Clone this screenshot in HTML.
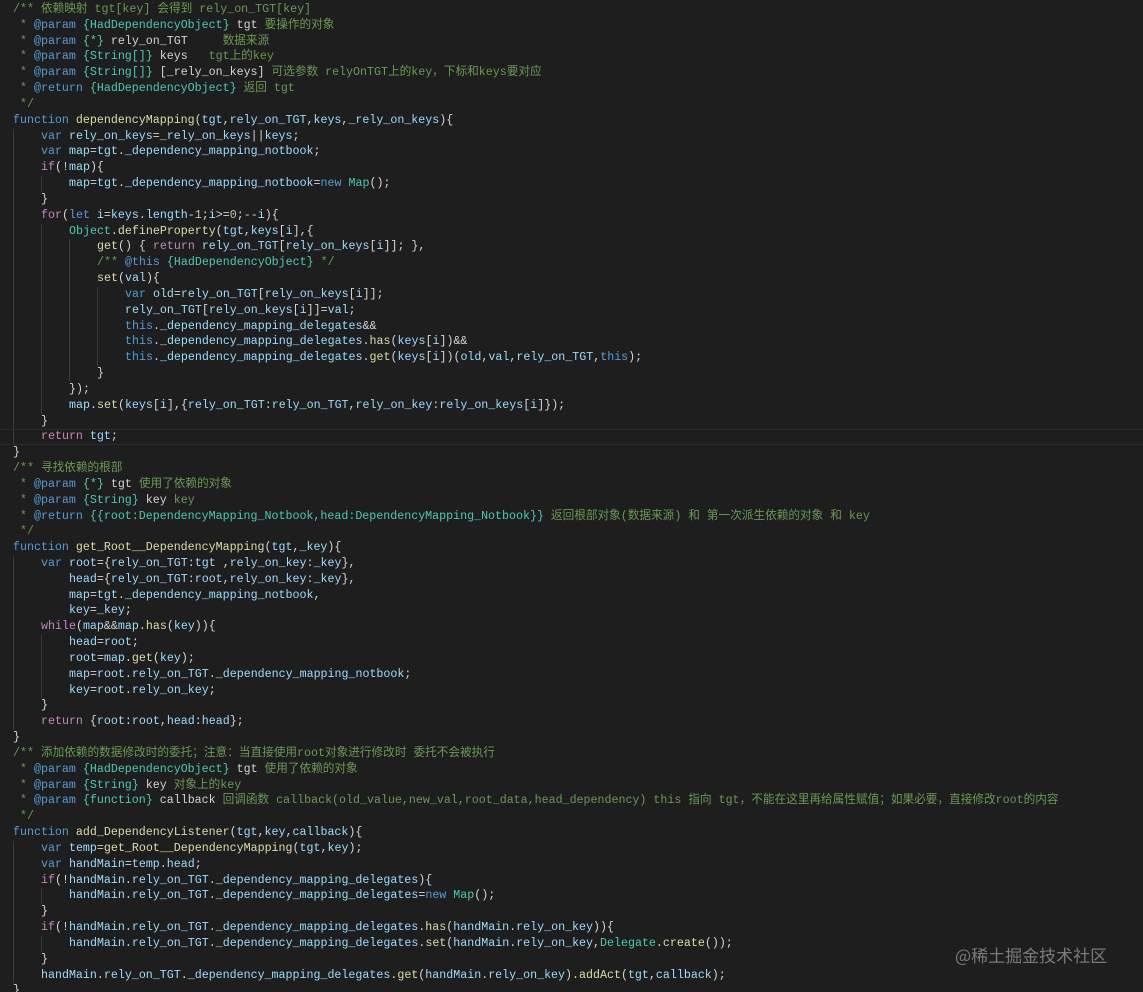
<!DOCTYPE html>
<html><head><meta charset="utf-8"><style>
html,body{margin:0;padding:0;background:#1e1e1e;width:1143px;height:992px;overflow:hidden}
pre{margin:0;padding:2px 0 0 13px;font-family:"Liberation Mono","Noto Sans CJK SC",monospace;font-size:11.65px;line-height:15.83px;color:#9cdcfe;white-space:pre}
.c{color:#6a9955}.a{color:#569cd6}.t{color:#4ec9b0}.w{color:#d4d4d4}
.k{color:#569cd6}.p{color:#c586c0}.f{color:#dcdcaa}.n{color:#b5cea8}.d{color:#d4d4d4}
i{display:inline-block;width:28px;height:15.83px;vertical-align:top;box-shadow:inset 1px 0 0 #3a3a3a}
.hl{position:absolute;left:0;top:429px;width:1143px;height:16px;border-top:1px solid #2c2c2c;border-bottom:1px solid #2c2c2c;box-sizing:border-box}
.wm{position:absolute;left:955px;top:942px;font-family:"Noto Sans CJK SC",sans-serif;font-size:17px;color:#7a7a7a}
</style></head><body>
<div class="hl"></div>
<pre><span class="c">/** 依赖映射 tgt[key] 会得到 rely_on_TGT[key]</span>
<span class="c"> * <span class="a">@param</span> <span class="t">{HadDependencyObject}</span> <span class="w">tgt</span> 要操作的对象</span>
<span class="c"> * <span class="a">@param</span> <span class="t">{*}</span> <span class="w">rely_on_TGT</span>     数据来源</span>
<span class="c"> * <span class="a">@param</span> <span class="t">{String[]}</span> <span class="w">keys</span>   tgt上的key</span>
<span class="c"> * <span class="a">@param</span> <span class="t">{String[]}</span> <span class="w">[_rely_on_keys]</span> 可选参数 relyOnTGT上的key，下标和keys要对应</span>
<span class="c"> * <span class="a">@return</span> <span class="t">{HadDependencyObject}</span> 返回 tgt</span>
<span class="c"> */</span>
<span class="k">function</span> <span class="f">dependencyMapping</span><span class="d">(</span>tgt<span class="d">,</span>rely_on_TGT<span class="d">,</span>keys<span class="d">,</span>_rely_on_keys<span class="d">){</span>
<i></i><span class="k">var</span> rely_on_keys<span class="d">=</span>_rely_on_keys<span class="d">||</span>keys<span class="d">;</span>
<i></i><span class="k">var</span> map<span class="d">=</span>tgt<span class="d">.</span>_dependency_mapping_notbook<span class="d">;</span>
<i></i><span class="p">if</span><span class="d">(!</span>map<span class="d">){</span>
<i></i><i></i>map<span class="d">=</span>tgt<span class="d">.</span>_dependency_mapping_notbook<span class="d">=</span><span class="k">new</span> <span class="t">Map</span><span class="d">();</span>
<i></i><span class="d">}</span>
<i></i><span class="p">for</span><span class="d">(</span><span class="k">let</span> i<span class="d">=</span>keys<span class="d">.</span>length<span class="d">-</span><span class="n">1</span><span class="d">;</span>i<span class="d">&gt;=</span><span class="n">0</span><span class="d">;--</span>i<span class="d">){</span>
<i></i><i></i><span class="t">Object</span><span class="d">.</span><span class="f">defineProperty</span><span class="d">(</span>tgt<span class="d">,</span>keys<span class="d">[</span>i<span class="d">],{</span>
<i></i><i></i><i></i><span class="f">get</span><span class="d">() { </span><span class="p">return</span> rely_on_TGT<span class="d">[</span>rely_on_keys<span class="d">[</span>i<span class="d">]]; },</span>
<i></i><i></i><i></i><span class="c">/** <span class="a">@this</span> <span class="t">{HadDependencyObject}</span> */</span>
<i></i><i></i><i></i><span class="f">set</span><span class="d">(</span>val<span class="d">){</span>
<i></i><i></i><i></i><i></i><span class="k">var</span> old<span class="d">=</span>rely_on_TGT<span class="d">[</span>rely_on_keys<span class="d">[</span>i<span class="d">]];</span>
<i></i><i></i><i></i><i></i>rely_on_TGT<span class="d">[</span>rely_on_keys<span class="d">[</span>i<span class="d">]]=</span>val<span class="d">;</span>
<i></i><i></i><i></i><i></i><span class="k">this</span><span class="d">.</span>_dependency_mapping_delegates<span class="d">&amp;&amp;</span>
<i></i><i></i><i></i><i></i><span class="k">this</span><span class="d">.</span>_dependency_mapping_delegates<span class="d">.</span><span class="f">has</span><span class="d">(</span>keys<span class="d">[</span>i<span class="d">])&amp;&amp;</span>
<i></i><i></i><i></i><i></i><span class="k">this</span><span class="d">.</span>_dependency_mapping_delegates<span class="d">.</span><span class="f">get</span><span class="d">(</span>keys<span class="d">[</span>i<span class="d">])(</span>old<span class="d">,</span>val<span class="d">,</span>rely_on_TGT<span class="d">,</span><span class="k">this</span><span class="d">);</span>
<i></i><i></i><i></i><span class="d">}</span>
<i></i><i></i><span class="d">});</span>
<i></i><i></i>map<span class="d">.</span><span class="f">set</span><span class="d">(</span>keys<span class="d">[</span>i<span class="d">],{</span>rely_on_TGT<span class="d">:</span>rely_on_TGT<span class="d">,</span>rely_on_key<span class="d">:</span>rely_on_keys<span class="d">[</span>i<span class="d">]});</span>
<i></i><span class="d">}</span>
<i></i><span class="p">return</span> tgt<span class="d">;</span>
<span class="d">}</span>
<span class="c">/** 寻找依赖的根部</span>
<span class="c"> * <span class="a">@param</span> <span class="t">{*}</span> <span class="w">tgt</span> 使用了依赖的对象</span>
<span class="c"> * <span class="a">@param</span> <span class="t">{String}</span> <span class="w">key</span> key</span>
<span class="c"> * <span class="a">@return</span> <span class="t">{{root:DependencyMapping_Notbook,head:DependencyMapping_Notbook}}</span> 返回根部对象(数据来源) 和 第一次派生依赖的对象 和 key</span>
<span class="c"> */</span>
<span class="k">function</span> <span class="f">get_Root__DependencyMapping</span><span class="d">(</span>tgt<span class="d">,</span>_key<span class="d">){</span>
<i></i><span class="k">var</span> root<span class="d">={</span>rely_on_TGT<span class="d">:</span>tgt <span class="d">,</span>rely_on_key<span class="d">:</span>_key<span class="d">},</span>
<i></i>    head<span class="d">={</span>rely_on_TGT<span class="d">:</span>root<span class="d">,</span>rely_on_key<span class="d">:</span>_key<span class="d">},</span>
<i></i>    map<span class="d">=</span>tgt<span class="d">.</span>_dependency_mapping_notbook<span class="d">,</span>
<i></i>    key<span class="d">=</span>_key<span class="d">;</span>
<i></i><span class="p">while</span><span class="d">(</span>map<span class="d">&amp;&amp;</span>map<span class="d">.</span><span class="f">has</span><span class="d">(</span>key<span class="d">)){</span>
<i></i><i></i>head<span class="d">=</span>root<span class="d">;</span>
<i></i><i></i>root<span class="d">=</span>map<span class="d">.</span><span class="f">get</span><span class="d">(</span>key<span class="d">);</span>
<i></i><i></i>map<span class="d">=</span>root<span class="d">.</span>rely_on_TGT<span class="d">.</span>_dependency_mapping_notbook<span class="d">;</span>
<i></i><i></i>key<span class="d">=</span>root<span class="d">.</span>rely_on_key<span class="d">;</span>
<i></i><span class="d">}</span>
<i></i><span class="p">return</span> <span class="d">{</span>root<span class="d">:</span>root<span class="d">,</span>head<span class="d">:</span>head<span class="d">};</span>
<span class="d">}</span>
<span class="c">/** 添加依赖的数据修改时的委托；注意：当直接使用root对象进行修改时 委托不会被执行</span>
<span class="c"> * <span class="a">@param</span> <span class="t">{HadDependencyObject}</span> <span class="w">tgt</span> 使用了依赖的对象</span>
<span class="c"> * <span class="a">@param</span> <span class="t">{String}</span> <span class="w">key</span> 对象上的key</span>
<span class="c"> * <span class="a">@param</span> <span class="t">{function}</span> <span class="w">callback</span> 回调函数 callback(old_value,new_val,root_data,head_dependency) this 指向 tgt，不能在这里再给属性赋值；如果必要，直接修改root的内容</span>
<span class="c"> */</span>
<span class="k">function</span> <span class="f">add_DependencyListener</span><span class="d">(</span>tgt<span class="d">,</span>key<span class="d">,</span>callback<span class="d">){</span>
<i></i><span class="k">var</span> temp<span class="d">=</span><span class="f">get_Root__DependencyMapping</span><span class="d">(</span>tgt<span class="d">,</span>key<span class="d">);</span>
<i></i><span class="k">var</span> handMain<span class="d">=</span>temp<span class="d">.</span>head<span class="d">;</span>
<i></i><span class="p">if</span><span class="d">(!</span>handMain<span class="d">.</span>rely_on_TGT<span class="d">.</span>_dependency_mapping_delegates<span class="d">){</span>
<i></i><i></i>handMain<span class="d">.</span>rely_on_TGT<span class="d">.</span>_dependency_mapping_delegates<span class="d">=</span><span class="k">new</span> <span class="t">Map</span><span class="d">();</span>
<i></i><span class="d">}</span>
<i></i><span class="p">if</span><span class="d">(!</span>handMain<span class="d">.</span>rely_on_TGT<span class="d">.</span>_dependency_mapping_delegates<span class="d">.</span><span class="f">has</span><span class="d">(</span>handMain<span class="d">.</span>rely_on_key<span class="d">)){</span>
<i></i><i></i>handMain<span class="d">.</span>rely_on_TGT<span class="d">.</span>_dependency_mapping_delegates<span class="d">.</span><span class="f">set</span><span class="d">(</span>handMain<span class="d">.</span>rely_on_key<span class="d">,</span><span class="t">Delegate</span><span class="d">.</span><span class="f">create</span><span class="d">());</span>
<i></i><span class="d">}</span>
<i></i>handMain<span class="d">.</span>rely_on_TGT<span class="d">.</span>_dependency_mapping_delegates<span class="d">.</span><span class="f">get</span><span class="d">(</span>handMain<span class="d">.</span>rely_on_key<span class="d">).</span><span class="f">addAct</span><span class="d">(</span>tgt<span class="d">,</span>callback<span class="d">);</span>
<span class="d">}</span></pre>
<div class="wm">@稀土掘金技术社区</div>
</body></html>
